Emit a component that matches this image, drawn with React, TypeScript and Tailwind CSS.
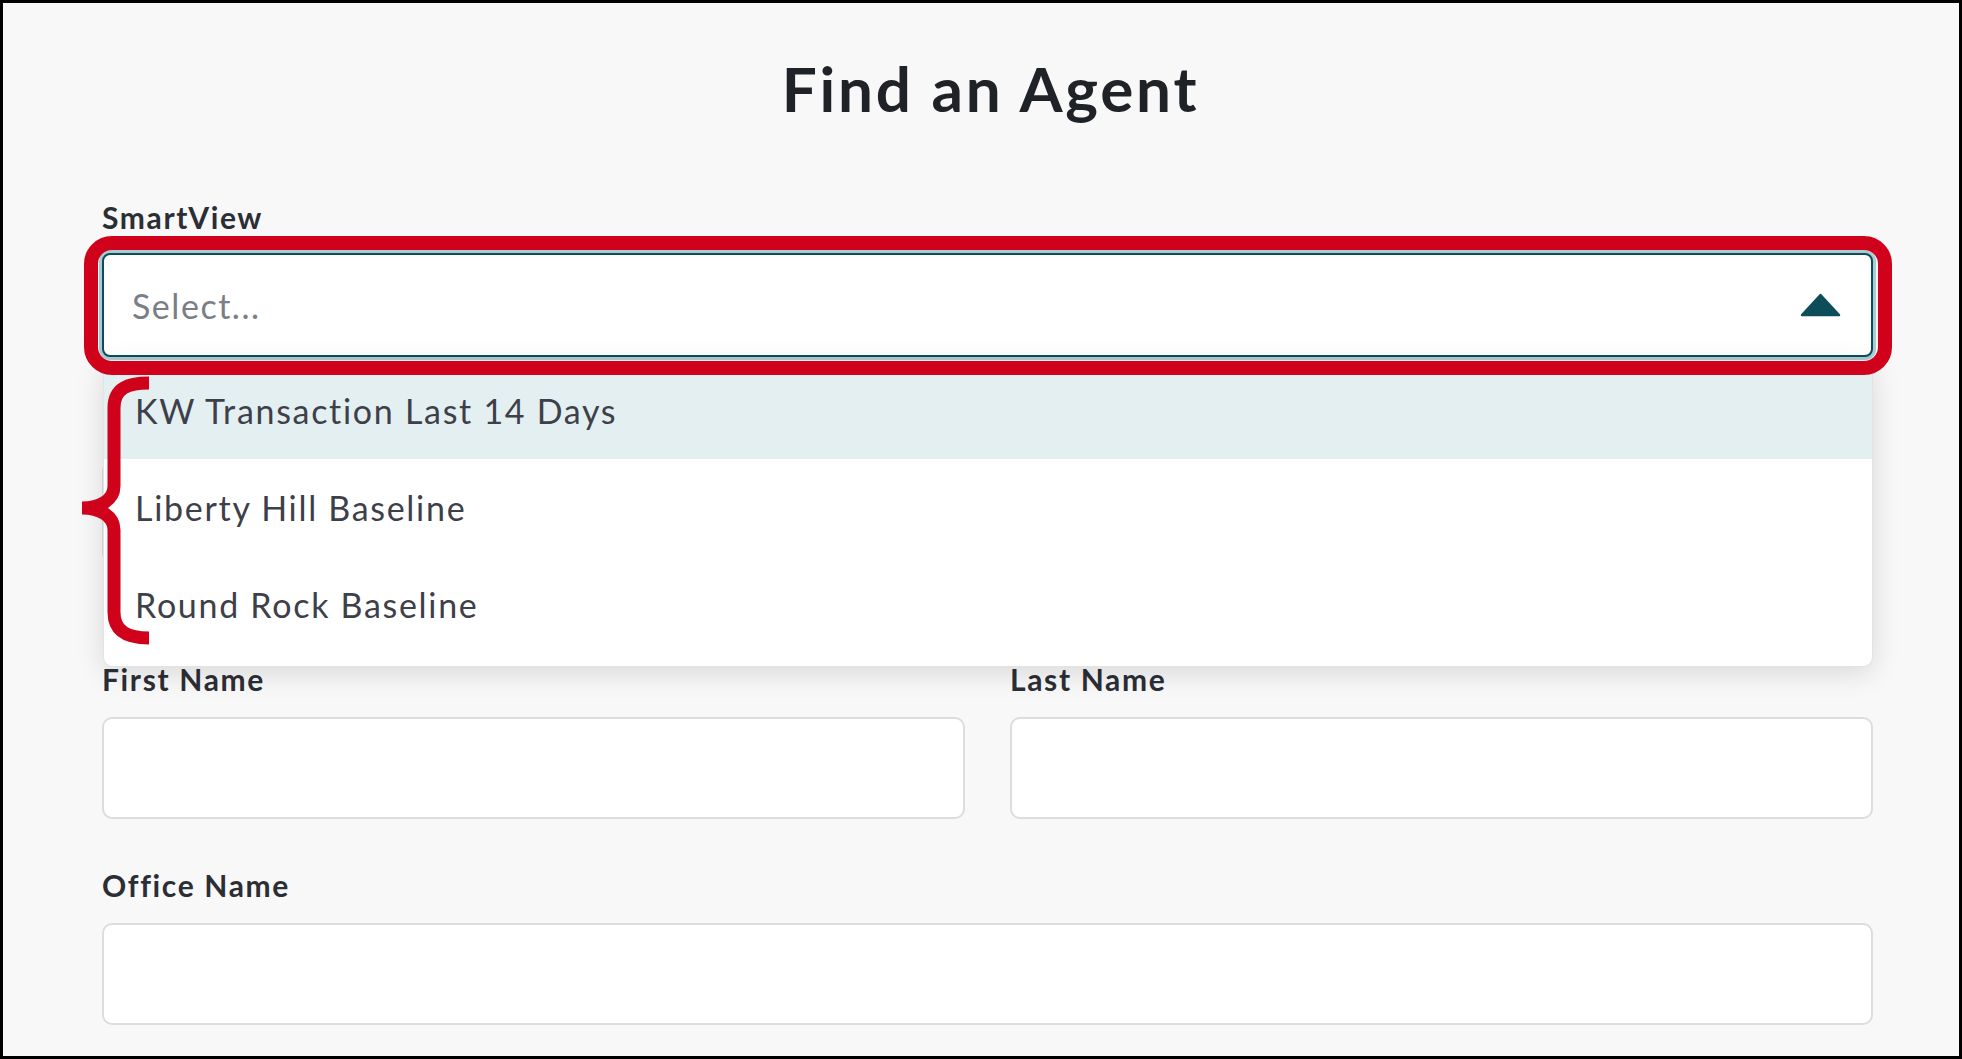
import React from "react";

const options = ["KW Transaction Last 14 Days", "Liberty Hill Baseline", "Round Rock Baseline"];

function Caret() {
  return (
    <svg width="41" height="24" viewBox="0 0 41 24" className="shrink-0">
      <path d="M20.5 2 L39 22 L2 22 Z" fill="#0d4d5a" stroke="#0d4d5a" strokeWidth="2.5" strokeLinejoin="round" />
    </svg>
  );
}

function Brace() {
  return (
    <svg
      width="76"
      height="276"
      viewBox="0 0 76 276"
      className="absolute left-[-24px] top-[119px] z-30 pointer-events-none"
    >
      <path
        d="M71 11 C50 11 36 16 36 36 L36 114 C36 128 22 136 4 136 C22 136 36 144 36 158 L36 240 C36 260 50 266 71 266"
        fill="none"
        stroke="#d0021b"
        strokeWidth="13"
        strokeLinecap="butt"
        strokeLinejoin="bevel"
      />
    </svg>
  );
}

function Field({ label, className = "" }: { label: string; className?: string }) {
  return (
    <div className={className}>
      <label className="block h-[30px] text-[30px] leading-none font-bold tracking-[0.055em] text-[#2b2e35]">{label}</label>
      <input className="mt-[23px] block w-full h-[102px] bg-white border-2 border-[#dddddd] rounded-[10px] outline-none" />
    </div>
  );
}

export default function App() {
  return (
    <div className="h-[1059px] box-border border-[3px] border-black bg-[#f8f8f8] pl-[99px] pr-[86px] pt-[54px] font-['Lato','Noto_Sans',sans-serif] overflow-hidden">
      <h1 className="text-[62px] leading-none font-bold tracking-[0.045em] text-center text-[#1f2226] pl-[6px]">Find an Agent</h1>

      <label className="block mt-[83px] text-[30px] leading-none font-bold tracking-[0.055em] text-[#2b2e35]">SmartView</label>

      <div className="relative mt-[21px]">
        <div className="h-[104px] bg-white border-2 border-[#0d4d5a] rounded-[8px] shadow-[0_0_0_3px_#a9ccd3] flex items-center justify-between pl-[28px] pr-[30px]">
          <span className="text-[34px] tracking-[0.045em] text-[#7a7e87]">Select...</span>
          <Caret />
        </div>

        <div className="absolute left-[1px] right-0 top-[calc(100%+4px)] z-10 bg-white border border-[#e3e3e3] rounded-b-[10px] shadow-[0_6px_28px_rgba(0,0,0,0.13)] pb-[13px]">
          {options.map((o, i) => (
            <div
              key={o}
              className={`h-[97px] flex items-center pl-[31px] text-[34px] tracking-[0.05em] text-[#3d4049] ${i === 0 ? "bg-[#e4eff1]" : ""}`}
            >
              {o}
            </div>
          ))}
        </div>

        <div className="absolute left-[-18px] right-[-19px] top-[-17px] bottom-[-18px] z-20 border-[14px] border-[#d0021b] rounded-[28px] pointer-events-none" />
        <Brace />
      </div>

      {/* field hidden behind the open menu */}
      <Field label="" className="mt-[51px]" />

      <div className="grid grid-cols-2 gap-x-[45px] mt-[101px]">
        <Field label="First Name" />
        <Field label="Last Name" />
      </div>

      <Field label="Office Name" className="mt-[51px]" />
    </div>
  );
}
